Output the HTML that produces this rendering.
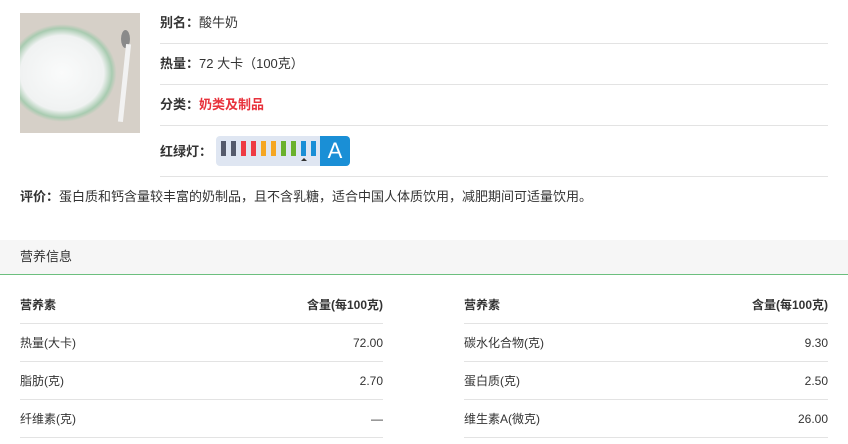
<!DOCTYPE html>
<html><head><meta charset="utf-8"><style>
*{margin:0;padding:0;box-sizing:border-box}
body{width:848px;height:444px;background:#fff;font-family:"Liberation Sans","Noto Sans CJK SC",sans-serif;font-size:13px;color:#333;position:relative;overflow:hidden}
.a{position:absolute;white-space:nowrap;line-height:16px}
.ln{position:absolute;height:1px;background:#e3e3e3}
b{font-weight:bold}
.bar{position:absolute;top:141px;width:5px;height:15px}
</style></head><body>
<div class="a" style="left:20px;top:13px;width:120px;height:120px;background:radial-gradient(ellipse 58px 52px at 42px 60px,#fafbfb 0,#f0f2f2 72%,#a8cbb0 86%,#d6d0c8 94%),#d3ccc3"></div>
<div class="a" style="left:121px;top:30px;width:9px;height:18px;border-radius:50%;background:#8a8a8a"></div>
<div class="a" style="left:122px;top:44px;width:5px;height:78px;background:#f2f2f2;transform:rotate(6deg)"></div>

<div class="a" style="left:160px;top:15px"><b>别名：</b>酸牛奶</div>
<div class="ln" style="left:160px;top:43px;width:668px"></div>
<div class="a" style="left:160px;top:56px"><b>热量：</b>72 大卡（100克）</div>
<div class="ln" style="left:160px;top:84px;width:668px"></div>
<div class="a" style="left:160px;top:97px"><b>分类：</b><b style="color:#e8323c">奶类及制品</b></div>
<div class="ln" style="left:160px;top:125px;width:668px"></div>
<div class="a" style="left:160px;top:144px"><b>红绿灯：</b></div>
<div class="a" style="left:216px;top:136px;width:134px;height:30px;background:#dfe6f2;border-radius:4px"></div>
<div class="bar" style="left:221px;background:#555a6b"></div>
<div class="bar" style="left:231px;background:#555a6b"></div>
<div class="bar" style="left:241px;background:#ee3b44"></div>
<div class="bar" style="left:251px;background:#ee3b44"></div>
<div class="bar" style="left:261px;background:#f5a623"></div>
<div class="bar" style="left:271px;background:#f5a623"></div>
<div class="bar" style="left:281px;background:#6ab12c"></div>
<div class="bar" style="left:291px;background:#6ab12c"></div>
<div class="bar" style="left:301px;background:#1a8fd6"></div>
<div class="bar" style="left:311px;background:#1a8fd6"></div>
<div class="a" style="left:301px;top:158px;width:0;height:0;border-left:3px solid transparent;border-right:3px solid transparent;border-bottom:3px solid #333"></div>
<div class="a" style="left:320px;top:136px;width:30px;height:30px;background:#1a8fd6;border-radius:0 4px 4px 0;color:#fff;font-size:22px;line-height:30px;text-align:center">A</div>
<div class="ln" style="left:160px;top:176px;width:668px"></div>

<div class="a" style="left:20px;top:189px"><b>评价：</b>蛋白质和钙含量较丰富的奶制品，且不含乳糖，适合中国人体质饮用，减肥期间可适量饮用。</div>

<div class="a" style="left:0;top:240px;width:848px;height:35px;background:#f6f6f6;border-bottom:1px solid #6cbf7e"></div>
<div class="a" style="left:20px;top:249px">营养信息</div>

<div class="a" style="left:20px;top:297px;font-size:12px"><b>营养素</b></div>
<div class="a" style="left:383px;top:297px;font-size:12px;transform:translateX(-100%)"><b>含量(每100克)</b></div>
<div class="a" style="left:464px;top:297px;font-size:12px"><b>营养素</b></div>
<div class="a" style="left:828px;top:297px;font-size:12px;transform:translateX(-100%)"><b>含量(每100克)</b></div>
<div class="ln" style="left:20px;top:323px;width:363px"></div>
<div class="ln" style="left:464px;top:323px;width:364px"></div>

<div class="a" style="left:20px;top:335px;font-size:12px">热量(大卡)</div>
<div class="a" style="left:383px;top:335px;font-size:12px;transform:translateX(-100%)">72.00</div>
<div class="a" style="left:464px;top:335px;font-size:12px">碳水化合物(克)</div>
<div class="a" style="left:828px;top:335px;font-size:12px;transform:translateX(-100%)">9.30</div>
<div class="ln" style="left:20px;top:361px;width:363px"></div>
<div class="ln" style="left:464px;top:361px;width:364px"></div>

<div class="a" style="left:20px;top:373px;font-size:12px">脂肪(克)</div>
<div class="a" style="left:383px;top:373px;font-size:12px;transform:translateX(-100%)">2.70</div>
<div class="a" style="left:464px;top:373px;font-size:12px">蛋白质(克)</div>
<div class="a" style="left:828px;top:373px;font-size:12px;transform:translateX(-100%)">2.50</div>
<div class="ln" style="left:20px;top:399px;width:363px"></div>
<div class="ln" style="left:464px;top:399px;width:364px"></div>

<div class="a" style="left:20px;top:411px;font-size:12px">纤维素(克)</div>
<div class="a" style="left:383px;top:411px;font-size:12px;transform:translateX(-100%)">—</div>
<div class="a" style="left:464px;top:411px;font-size:12px">维生素A(微克)</div>
<div class="a" style="left:828px;top:411px;font-size:12px;transform:translateX(-100%)">26.00</div>
<div class="ln" style="left:20px;top:437px;width:363px"></div>
<div class="ln" style="left:464px;top:437px;width:364px"></div>
</body></html>
